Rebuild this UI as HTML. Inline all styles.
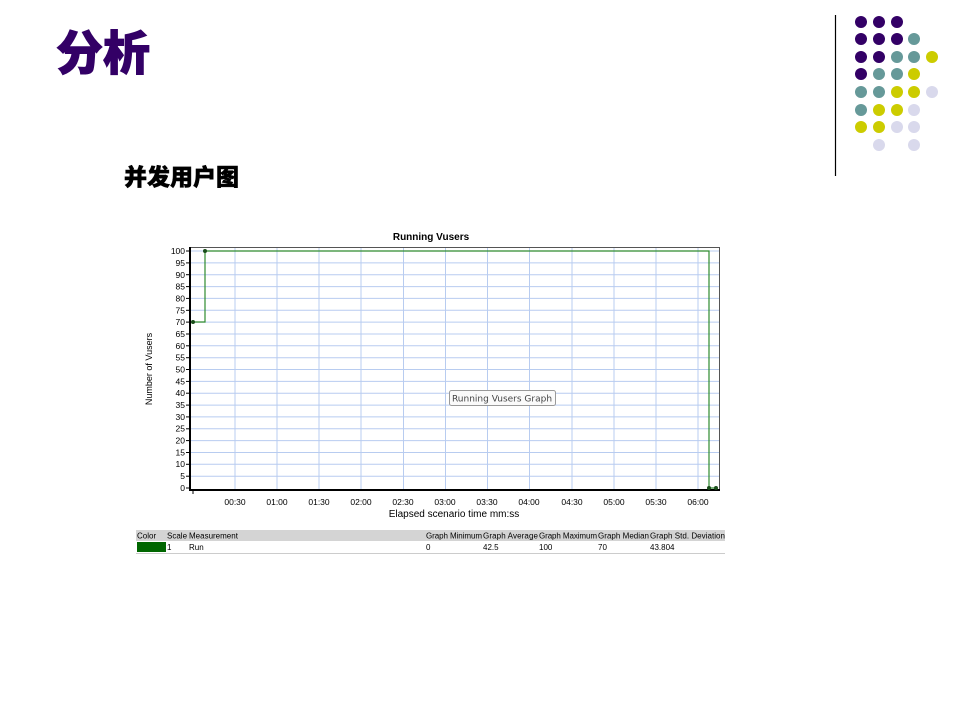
<!DOCTYPE html>
<html><head><meta charset="utf-8"><style>
body{margin:0;width:960px;height:720px;background:#fff;position:relative;overflow:hidden;font-family:"Liberation Sans","Noto Sans CJK SC",sans-serif}
.t{position:absolute;left:56px;top:23px;font-size:47px;font-weight:900;color:#330066;line-height:62px;-webkit-text-stroke:1px #330066}
.s{position:absolute;left:124px;top:162px;font-size:23px;font-weight:900;color:#000;line-height:30px;-webkit-text-stroke:0.5px #000}
svg{position:absolute;left:0;top:0}
</style></head><body>
<div class="t">分析</div>
<div class="s">并发用户图</div>
<svg width="960" height="720" font-family="Liberation Sans, sans-serif">
<line x1="835.5" y1="15" x2="835.5" y2="176" stroke="#000" stroke-width="1.2"/>
<g>
<circle cx="861" cy="22" r="6" fill="#330066"/><circle cx="879" cy="22" r="6" fill="#330066"/><circle cx="897" cy="22" r="6" fill="#330066"/>
<circle cx="861" cy="39" r="6" fill="#330066"/><circle cx="879" cy="39" r="6" fill="#330066"/><circle cx="897" cy="39" r="6" fill="#330066"/><circle cx="914" cy="39" r="6" fill="#669999"/>
<circle cx="861" cy="57" r="6" fill="#330066"/><circle cx="879" cy="57" r="6" fill="#330066"/><circle cx="897" cy="57" r="6" fill="#669999"/><circle cx="914" cy="57" r="6" fill="#669999"/><circle cx="932" cy="57" r="6" fill="#cccc00"/>
<circle cx="861" cy="74" r="6" fill="#330066"/><circle cx="879" cy="74" r="6" fill="#669999"/><circle cx="897" cy="74" r="6" fill="#669999"/><circle cx="914" cy="74" r="6" fill="#cccc00"/>
<circle cx="861" cy="92" r="6" fill="#669999"/><circle cx="879" cy="92" r="6" fill="#669999"/><circle cx="897" cy="92" r="6" fill="#cccc00"/><circle cx="914" cy="92" r="6" fill="#cccc00"/><circle cx="932" cy="92" r="6" fill="#d9d9ec"/>
<circle cx="861" cy="110" r="6" fill="#669999"/><circle cx="879" cy="110" r="6" fill="#cccc00"/><circle cx="897" cy="110" r="6" fill="#cccc00"/><circle cx="914" cy="110" r="6" fill="#d9d9ec"/>
<circle cx="861" cy="127" r="6" fill="#cccc00"/><circle cx="879" cy="127" r="6" fill="#cccc00"/><circle cx="897" cy="127" r="6" fill="#d9d9ec"/><circle cx="914" cy="127" r="6" fill="#d9d9ec"/>
<circle cx="879" cy="145" r="6" fill="#d9d9ec"/><circle cx="914" cy="145" r="6" fill="#d9d9ec"/>
</g>
<text x="431" y="240" font-size="10" font-weight="bold" text-anchor="middle">Running Vusers</text>
<g stroke="#b8ccf0" stroke-width="1">
<line x1="190" x2="719" y1="476.2" y2="476.2"/><line x1="190" x2="719" y1="464.3" y2="464.3"/><line x1="190" x2="719" y1="452.5" y2="452.5"/><line x1="190" x2="719" y1="440.6" y2="440.6"/><line x1="190" x2="719" y1="428.8" y2="428.8"/><line x1="190" x2="719" y1="416.9" y2="416.9"/><line x1="190" x2="719" y1="405.1" y2="405.1"/><line x1="190" x2="719" y1="393.2" y2="393.2"/><line x1="190" x2="719" y1="381.4" y2="381.4"/><line x1="190" x2="719" y1="369.5" y2="369.5"/><line x1="190" x2="719" y1="357.7" y2="357.7"/><line x1="190" x2="719" y1="345.8" y2="345.8"/><line x1="190" x2="719" y1="334" y2="334"/><line x1="190" x2="719" y1="322.1" y2="322.1"/><line x1="190" x2="719" y1="310.3" y2="310.3"/><line x1="190" x2="719" y1="298.4" y2="298.4"/><line x1="190" x2="719" y1="286.6" y2="286.6"/><line x1="190" x2="719" y1="274.7" y2="274.7"/><line x1="190" x2="719" y1="262.9" y2="262.9"/><line x1="190" x2="719" y1="251" y2="251"/>
<line y1="247" y2="490" x1="235" x2="235"/><line y1="247" y2="490" x1="277" x2="277"/><line y1="247" y2="490" x1="319" x2="319"/><line y1="247" y2="490" x1="361" x2="361"/><line y1="247" y2="490" x1="403.5" x2="403.5"/><line y1="247" y2="490" x1="445.5" x2="445.5"/><line y1="247" y2="490" x1="487.5" x2="487.5"/><line y1="247" y2="490" x1="529.5" x2="529.5"/><line y1="247" y2="490" x1="572" x2="572"/><line y1="247" y2="490" x1="614" x2="614"/><line y1="247" y2="490" x1="656" x2="656"/><line y1="247" y2="490" x1="698" x2="698"/>
</g>
<rect x="190.5" y="247.5" width="529" height="243" fill="none" stroke="#555" stroke-width="1"/>
<line x1="190" y1="247" x2="190" y2="491" stroke="#000" stroke-width="2"/>
<line x1="190" y1="490" x2="720" y2="490" stroke="#000" stroke-width="2"/>
<g stroke="#000" stroke-width="1">
<line x1="186" x2="190" y1="488" y2="488"/><line x1="186" x2="190" y1="476.2" y2="476.2"/><line x1="186" x2="190" y1="464.3" y2="464.3"/><line x1="186" x2="190" y1="452.5" y2="452.5"/><line x1="186" x2="190" y1="440.6" y2="440.6"/><line x1="186" x2="190" y1="428.8" y2="428.8"/><line x1="186" x2="190" y1="416.9" y2="416.9"/><line x1="186" x2="190" y1="405.1" y2="405.1"/><line x1="186" x2="190" y1="393.2" y2="393.2"/><line x1="186" x2="190" y1="381.4" y2="381.4"/><line x1="186" x2="190" y1="369.5" y2="369.5"/><line x1="186" x2="190" y1="357.7" y2="357.7"/><line x1="186" x2="190" y1="345.8" y2="345.8"/><line x1="186" x2="190" y1="334" y2="334"/><line x1="186" x2="190" y1="322.1" y2="322.1"/><line x1="186" x2="190" y1="310.3" y2="310.3"/><line x1="186" x2="190" y1="298.4" y2="298.4"/><line x1="186" x2="190" y1="286.6" y2="286.6"/><line x1="186" x2="190" y1="274.7" y2="274.7"/><line x1="186" x2="190" y1="262.9" y2="262.9"/><line x1="186" x2="190" y1="251" y2="251"/>
<line x1="193" x2="193" y1="490" y2="494"/>
</g>
<g font-size="8.5" text-anchor="end" fill="#000">
<text x="185" y="491">0</text><text x="185" y="479">5</text><text x="185" y="467">10</text><text x="185" y="455.5">15</text><text x="185" y="443.5">20</text><text x="185" y="431.5">25</text><text x="185" y="420">30</text><text x="185" y="408">35</text><text x="185" y="396">40</text><text x="185" y="384.5">45</text><text x="185" y="372.5">50</text><text x="185" y="360.5">55</text><text x="185" y="349">60</text><text x="185" y="337">65</text><text x="185" y="325">70</text><text x="185" y="313.5">75</text><text x="185" y="301.5">80</text><text x="185" y="289.5">85</text><text x="185" y="278">90</text><text x="185" y="266">95</text><text x="185" y="254">100</text>
</g>
<g font-size="8.5" text-anchor="middle">
<text x="235" y="505">00:30</text><text x="277" y="505">01:00</text><text x="319" y="505">01:30</text><text x="361" y="505">02:00</text><text x="403" y="505">02:30</text><text x="445" y="505">03:00</text><text x="487" y="505">03:30</text><text x="529" y="505">04:00</text><text x="572" y="505">04:30</text><text x="614" y="505">05:00</text><text x="656" y="505">05:30</text><text x="698" y="505">06:00</text>
</g>
<text x="454" y="517" font-size="10" text-anchor="middle">Elapsed scenario time mm:ss</text>
<text transform="translate(152,369) rotate(-90)" font-size="9" text-anchor="middle">Number of Vusers</text>
<polyline points="193,322 205,322 205,251 709,251 709,488 716,488" fill="none" stroke="#2e8b2e" stroke-width="1.2"/>
<g fill="#1a4d1a"><circle cx="193" cy="322" r="2"/><circle cx="205" cy="251" r="2"/><circle cx="709" cy="488" r="2"/><circle cx="716" cy="488" r="2"/></g>
<rect x="449.5" y="390.5" width="106" height="15" rx="2" fill="#fafafa" stroke="#999"/>
<text x="502" y="401.5" font-size="9" text-anchor="middle" fill="#444" font-family="DejaVu Sans, sans-serif">Running Vusers Graph</text>
<rect x="136" y="530" width="589" height="11" fill="#d4d4d4"/>
<rect x="137" y="542" width="29" height="10" fill="#006600"/>
<line x1="136" y1="553.5" x2="725" y2="553.5" stroke="#ccc"/>
<g font-size="8" fill="#000">
<text x="137" y="538.5">Color</text><text x="167" y="538.5">Scale</text><text x="189" y="538.5">Measurement</text><text x="426" y="538.5" textLength="56">Graph Minimum</text><text x="483" y="538.5" textLength="55">Graph Average</text><text x="539" y="538.5" textLength="58">Graph Maximum</text><text x="598" y="538.5" textLength="51">Graph Median</text><text x="650" y="538.5" textLength="75">Graph Std. Deviation</text>
<text x="167" y="550">1</text><text x="189" y="550">Run</text><text x="426" y="550">0</text><text x="483" y="550">42.5</text><text x="539" y="550">100</text><text x="598" y="550">70</text><text x="650" y="550">43.804</text>
</g>
</svg>
</body></html>
